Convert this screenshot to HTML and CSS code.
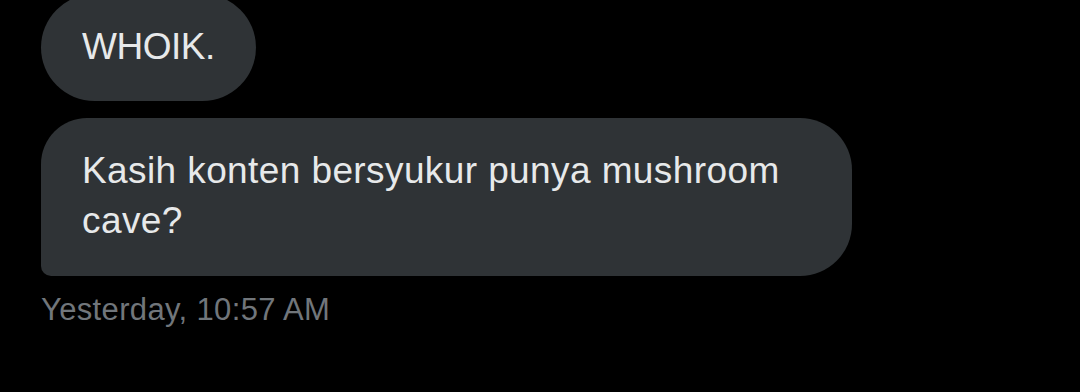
FILE: index.html
```html
<!DOCTYPE html>
<html lang="id">
<head>
    <meta charset="UTF-8">
    <meta name="viewport" content="width=device-width, initial-scale=1.0">
    <title>Messages</title>
    <link rel="stylesheet" href="styles.css">
</head>
<body>
    <div class="thread">
        <div class="bubble first">WHOIK.</div>
        <div class="bubble last">Kasih konten bersyukur punya mushroom cave?</div>
        <div class="timestamp">Yesterday, 10:57 AM</div>
    </div>
</body>
</html>
```

FILE: styles.css
```css
body {
    font-family: "Liberation Sans", Arial, sans-serif;
    margin: 0;
    background-color: #000;
    color: #e7e9ea;
}
.thread {
    display: flex;
    flex-direction: column;
    align-items: flex-start;
    gap: 17px;
    padding-left: 41px;
    margin-top: -6px;
}
.bubble {
    box-sizing: border-box;
    max-width: 811px;
    padding: 28px 41px 29px;
    font-size: 37px;
    line-height: 50px;
    letter-spacing: 0.4px;
    background-color: #2f3336;
    border-radius: 54px;
}
.bubble.first {
    letter-spacing: -0.5px;
}
.bubble.last {
    padding-bottom: 30px;
    border-radius: 46px 52px 52px 10px;
}
.timestamp {
    margin-top: -3px;
    font-size: 31px;
    line-height: 40px;
    letter-spacing: 0.35px;
    color: #71767b;
}
```
